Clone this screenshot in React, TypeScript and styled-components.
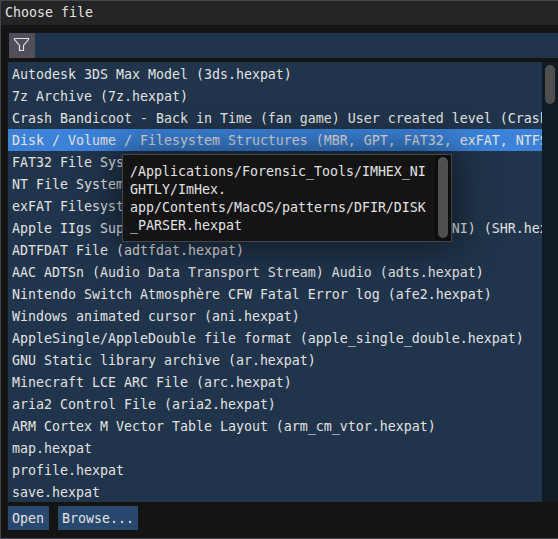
import React from 'react';
import styled, { createGlobalStyle } from 'styled-components';

const GlobalStyle = createGlobalStyle`
  * { box-sizing: border-box; }
  body { margin: 0; background: #141414; overflow: hidden; }
`;

const Dialog = styled.div`
  position: relative;
  display: flex;
  flex-direction: column;
  width: 558px;
  height: 539px;
  overflow: hidden;
  background: #141414;
  border: 1px solid #45454f;
  border-right: 0;
  color: #e2e2e2;
  font-family: 'DejaVu Sans Mono', monospace;
  font-size: 13.29px;
  white-space: pre;
`;

const TitleBar = styled.header`
  flex: none;
  height: 24px;
  padding-left: 4px;
  line-height: 24px;
  background: #242424;
`;

const FilterBar = styled.div`
  flex: none;
  display: flex;
  height: 25px;
  margin: 8px 0 4px 8px;
  background: #20344b;
`;

const FilterButton = styled.span`
  display: flex;
  width: 26px;
  height: 25px;
  padding: 4px 0 0 4px;
  background: #4f4f59;
`;

const ListFrame = styled.div`
  flex: none;
  display: flex;
  height: 440px;
  margin-left: 7px;
  background: #20344b;
`;

const List = styled.ul`
  flex: 1;
  min-width: 0;
  margin: 0;
  padding: 1px 0 0;
  overflow: hidden;
  list-style: none;
`;

const Item = styled.li<{ $selected?: boolean }>`
  height: 22px;
  padding: 1px 0 0 4px;
  line-height: 22px;
  background: ${({ $selected }) => ($selected ? '#3b82d8' : 'transparent')};
`;

const Track = styled.div`
  flex: none;
  width: 16px;
  padding: 3px 3px 0;
  background: #111b24;
`;

const Thumb = styled.div<{ $height: number }>`
  width: 10px;
  height: ${({ $height }) => $height}px;
  border-radius: 5px;
  background: #4f4f4f;
`;

const Actions = styled.footer`
  display: flex;
  gap: 9px;
  padding: 4px 0 0 7px;
`;

const Button = styled.button<{ $width: number }>`
  width: ${({ $width }) => $width}px;
  height: 24px;
  padding: 1px 0 0 4px;
  border: 0;
  background: #28486f;
  color: inherit;
  font: inherit;
  line-height: 23px;
  text-align: left;
`;

const Tooltip = styled.div`
  position: absolute;
  left: 121px;
  top: 153px;
  display: flex;
  width: 330px;
  height: 88px;
  background: #141414;
  border: 1px solid #45454d;
  box-shadow: 0 0 40px 4px rgba(0, 0, 0, 0.55);
`;

const Path = styled.div`
  flex: 1;
  padding: 8px 0 0 7px;
  line-height: 18px;
`;

const TipTrack = styled.div`
  width: 16px;
  padding: 2px 3px 0;
  background: #0e0e0e;
`;

const files = [
  'Autodesk 3DS Max Model (3ds.hexpat)',
  '7z Archive (7z.hexpat)',
  'Crash Bandicoot - Back in Time (fan game) User created level (Crash)',
  'Disk / Volume / Filesystem Structures (MBR, GPT, FAT32, exFAT, NTFS)',
  'FAT32 File System',
  'NT File System',
  'exFAT Filesystem',
  'Apple IIgs Super Hi-Res (SHR) + PaintWorks Animation (ANI) (SHR.hexpat)',
  'ADTFDAT File (adtfdat.hexpat)',
  'AAC ADTSn (Audio Data Transport Stream) Audio (adts.hexpat)',
  'Nintendo Switch Atmosphère CFW Fatal Error log (afe2.hexpat)',
  'Windows animated cursor (ani.hexpat)',
  'AppleSingle/AppleDouble file format (apple_single_double.hexpat)',
  'GNU Static library archive (ar.hexpat)',
  'Minecraft LCE ARC File (arc.hexpat)',
  'aria2 Control File (aria2.hexpat)',
  'ARM Cortex M Vector Table Layout (arm_cm_vtor.hexpat)',
  'map.hexpat',
  'profile.hexpat',
  'save.hexpat',
];

const pathLines = [
  '/Applications/Forensic_Tools/IMHEX_NI',
  'GHTLY/ImHex.',
  'app/Contents/MacOS/patterns/DFIR/DISK',
  '_PARSER.hexpat',
];

export default function App() {
  return (
    <>
      <GlobalStyle />
      <Dialog>
        <TitleBar>Choose file</TitleBar>
        <FilterBar>
          <FilterButton>
            <svg width="17" height="16" viewBox="0 0 17 16" fill="none" stroke="#e2e2e2" strokeWidth="1.15">
              <path d="M1.5 1.5H15.5V2.5L10.5 8.5V13.5H6.5V8.5L1.5 2.5Z" />
            </svg>
          </FilterButton>
        </FilterBar>
        <ListFrame>
          <List>
            {files.map((name, i) => (
              <Item key={name} $selected={i === 3}>{name}</Item>
            ))}
          </List>
          <Track><Thumb $height={39} /></Track>
        </ListFrame>
        <Actions>
          <Button $width={41}>Open</Button>
          <Button $width={80}>Browse...</Button>
        </Actions>
        <Tooltip>
          <Path>
            {pathLines.map((line) => <div key={line}>{line}</div>)}
          </Path>
          <TipTrack><Thumb $height={81} /></TipTrack>
        </Tooltip>
      </Dialog>
    </>
  );
}
